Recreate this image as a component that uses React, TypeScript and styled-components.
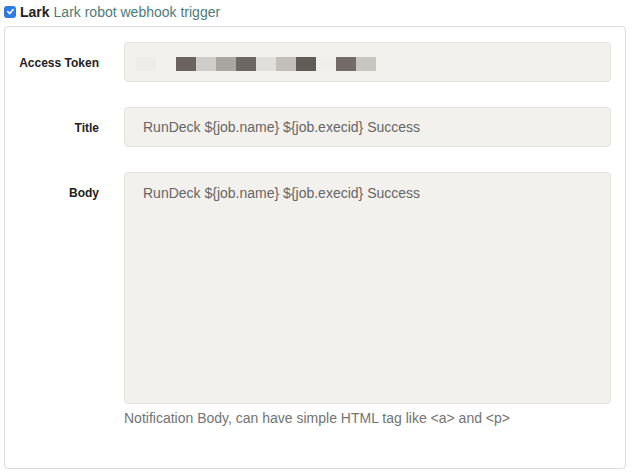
import React from "react";
import styled, { createGlobalStyle } from "styled-components";

const GlobalStyle = createGlobalStyle`
  html, body {
    margin: 0;
    padding: 0;
    background: #fff;
    font-family: "Liberation Sans", Arial, sans-serif;
  }
`;

const Page = styled.div`
  width: 632px;
  height: 473px;
  padding: 0 6px 0 4px;
  box-sizing: border-box;
`;

const Header = styled.div`
  display: flex;
  align-items: center;
  height: 23px;
  padding-top: 0;
  font-size: 14px;
`;

const Check = styled.span`
  display: inline-flex;
  align-items: center;
  justify-content: center;
  width: 12px;
  height: 12px;
  border-radius: 3px;
  background: #2f7be6;
  margin-right: 4px;
`;

const PluginName = styled.b`
  color: #222;
  font-weight: bold;
  margin-right: 4px;
`;

const PluginDesc = styled.span`
  color: #4e7b78;
`;

const Panel = styled.div`
  margin-top: 3px;
  border: 1px solid #dcdcdc;
  border-radius: 4px;
  height: 443px;
  box-sizing: border-box;
  padding: 15px 14px 0 0;
`;

const Row = styled.div<{ $mb: number }>`
  display: grid;
  grid-template-columns: 94px 1fr;
  column-gap: 25px;
  margin-bottom: ${(p) => p.$mb}px;
`;

const Label = styled.label<{ $top: number }>`
  text-align: right;
  font-size: 12px;
  font-weight: bold;
  color: #222;
  padding-top: ${(p) => p.$top}px;
`;

const Field = styled.div<{ $h: number; $top: number }>`
  height: ${(p) => p.$h}px;
  box-sizing: border-box;
  background: #f2f1ee;
  border: 1px solid #e4e2de;
  border-radius: 4px;
  padding: ${(p) => p.$top}px 18px 0;
  font-size: 14px;
  color: #666;
`;

const Pixels = styled.div`
  display: flex;
  padding-top: 14px;
  padding-left: -6px;
  margin-left: -7px;
`;

const Pixel = styled.span<{ $c: string }>`
  width: 20px;
  height: 14px;
  background: ${(p) => p.$c};
`;

const Help = styled.div`
  margin-top: 6px;
  font-size: 14px;
  color: #737373;
`;

const tokenColors = [
  "#eeede9",
  "#f2f1ee",
  "#6b645e",
  "#cfcdc9",
  "#a9a6a1",
  "#6e6862",
  "#e0dfdb",
  "#c2bfba",
  "#625c56",
  "#f0efeb",
  "#736c66",
  "#c8c6c1",
];

const template = "RunDeck ${job.name} ${job.execid} Success";

export default function App() {
  return (
    <Page>
      <GlobalStyle />
      <Header>
        <Check>
          <svg width="9" height="9" viewBox="0 0 10 10">
            <path
              d="M2 5.2L4.2 7.3L8 2.8"
              fill="none"
              stroke="#fff"
              strokeWidth={1.8}
              strokeLinecap="round"
              strokeLinejoin="round"
            />
          </svg>
        </Check>
        <PluginName>Lark</PluginName>
        <PluginDesc>Lark robot webhook trigger</PluginDesc>
      </Header>
      <Panel>
        <Row $mb={25}>
          <Label $top={14}>Access Token</Label>
          <Field $h={40} $top={0}>
            <Pixels>
              {tokenColors.map((c, i) => (
                <Pixel key={i} $c={c} />
              ))}
            </Pixels>
          </Field>
        </Row>
        <Row $mb={25}>
          <Label $top={14}>Title</Label>
          <Field $h={40} $top={11}>
            {template}
          </Field>
        </Row>
        <Row $mb={0}>
          <Label $top={14}>Body</Label>
          <div>
            <Field $h={232} $top={12}>
              {template}
            </Field>
            <Help>Notification Body, can have simple HTML tag like &lt;a&gt; and &lt;p&gt;</Help>
          </div>
        </Row>
      </Panel>
    </Page>
  );
}
